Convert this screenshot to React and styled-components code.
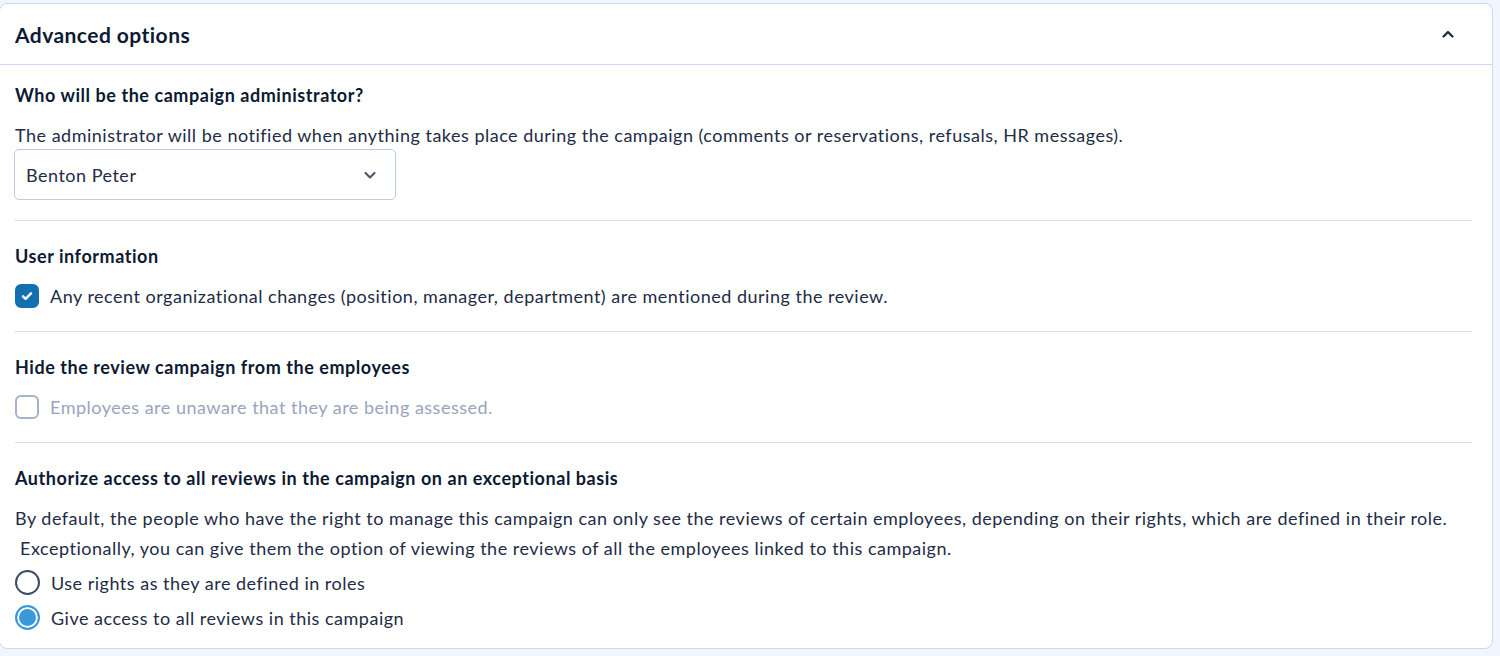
import React from "react";
import styled, { createGlobalStyle } from "styled-components";

const GlobalStyle = createGlobalStyle`
  html, body {
    margin: 0;
    padding: 0;
    background: #f1f5fd;
  }
  body {
    font-family: Lato, "Noto Sans", sans-serif;
    color: #1f2a44;
  }
`;

const Card = styled.section`
  margin: 3px 7px 0 -1px;
  width: 1494px;
  box-sizing: border-box;
  background: #fff;
  border: 1px solid #cdd9ee;
  border-radius: 8px;
  overflow: hidden;
`;

const Header = styled.header`
  display: flex;
  align-items: center;
  justify-content: space-between;
  height: 60px;
  padding: 0 36px 0 15px;
  border-bottom: 1px solid #cdd9ee;
`;

const HeaderTitle = styled.h2`
  margin: 0;
  font-size: 21px;
  font-weight: 700;
  letter-spacing: 0.45px;
  color: #0d1a33;
`;

const Body = styled.div`
  padding: 0 20px 0 15px;
`;

const Section = styled.div`
  padding: ${(p) => (p.first ? "18px" : "23px")} 0 ${(p) => (p.last ? "13px" : "20px")};
  border-bottom: ${(p) => (p.last ? "none" : "1px solid #d3dcec")};
`;

const Title = styled.h3`
  margin: 0 0 13px;
  font-size: 18px;
  line-height: 24px;
  font-weight: 700;
  letter-spacing: 0.55px;
  color: #0d1a33;
`;

const Text = styled.p`
  margin: 0;
  font-size: 18px;
  line-height: 30px;
  letter-spacing: 0.5px;
  color: #222c45;
  white-space: pre;
`;

const Select = styled.div`
  display: flex;
  align-items: center;
  justify-content: space-between;
  box-sizing: border-box;
  width: 382px;
  height: 51px;
  margin: -1px 0 0 -1px;
  padding: 0 17px 0 11px;
  border: 1px solid #bccbe3;
  border-radius: 5px;
  font-size: 18px;
  letter-spacing: 0.5px;
  color: #222c45;
`;

const Row = styled.label`
  display: flex;
  align-items: center;
  gap: 11px;
  height: ${(p) => p.h || 30}px;
  font-size: 18px;
  letter-spacing: 0.5px;
  color: ${(p) => (p.disabled ? "#98a4bc" : "#222c45")};
`;

const RadioGroup = styled.div`
  margin-top: 2px;
`;

const Box = styled.span`
  display: flex;
  align-items: center;
  justify-content: center;
  box-sizing: border-box;
  width: 24px;
  height: 24px;
  border-radius: 6px;
  background: ${(p) => (p.checked ? "#1270b1" : "#fff")};
  border: 2px solid ${(p) => (p.checked ? "#1270b1" : "#a4b2cc")};
`;

const Radio = styled.span`
  box-sizing: border-box;
  width: 25px;
  height: 25px;
  border-radius: 50%;
  border: 2px solid ${(p) => (p.checked ? "#3a9ad9" : "#3c4a66")};
  background: ${(p) => (p.checked ? "#3a9ad9" : "#fff")};
  box-shadow: ${(p) => (p.checked ? "inset 0 0 0 2px #fff" : "none")};
`;

const Chevron = ({ up, color = "#4a5874" }) => (
  <svg width="16" height="16" viewBox="0 0 16 16" fill="none">
    <path
      d={up ? "M3.5 10.5L8 6l4.5 4.5" : "M3.5 6L8 10.5 12.5 6"}
      stroke={color}
      strokeWidth="2.2"
      strokeLinecap="round"
      strokeLinejoin="round"
    />
  </svg>
);

const Check = () => (
  <svg width="14" height="14" viewBox="0 0 14 14" fill="none">
    <path d="M3 7.3l2.6 2.5L11 4.3" stroke="#fff" strokeWidth="2.4" strokeLinecap="round" strokeLinejoin="round" />
  </svg>
);

export default function App() {
  return (
    <>
      <GlobalStyle />
      <Card>
        <Header>
          <HeaderTitle>Advanced options</HeaderTitle>
          <Chevron up color="#1a2740" />
        </Header>
        <Body>
          <Section first>
            <Title>Who will be the campaign administrator?</Title>
            <Text>
              The administrator will be notified when anything takes place during the campaign (comments or reservations, refusals, HR messages).
            </Text>
            <Select>
              <span>Benton Peter</span>
              <Chevron />
            </Select>
          </Section>
          <Section>
            <Title>User information</Title>
            <Row>
              <Box checked>
                <Check />
              </Box>
              Any recent organizational changes (position, manager, department) are mentioned during the review.
            </Row>
          </Section>
          <Section>
            <Title>Hide the review campaign from the employees</Title>
            <Row disabled>
              <Box />
              Employees are unaware that they are being assessed.
            </Row>
          </Section>
          <Section last>
            <Title>Authorize access to all reviews in the campaign on an exceptional basis</Title>
            <Text>
              By default, the people who have the right to manage this campaign can only see the reviews of certain employees, depending on their rights, which are defined in their role.
            </Text>
            <Text>{" Exceptionally, you can give them the option of viewing the reviews of all the employees linked to this campaign."}</Text>
            <RadioGroup>
              <Row h={35}>
                <Radio />
                Use rights as they are defined in roles
              </Row>
              <Row h={35}>
                <Radio checked />
                Give access to all reviews in this campaign
              </Row>
            </RadioGroup>
          </Section>
        </Body>
      </Card>
    </>
  );
}
